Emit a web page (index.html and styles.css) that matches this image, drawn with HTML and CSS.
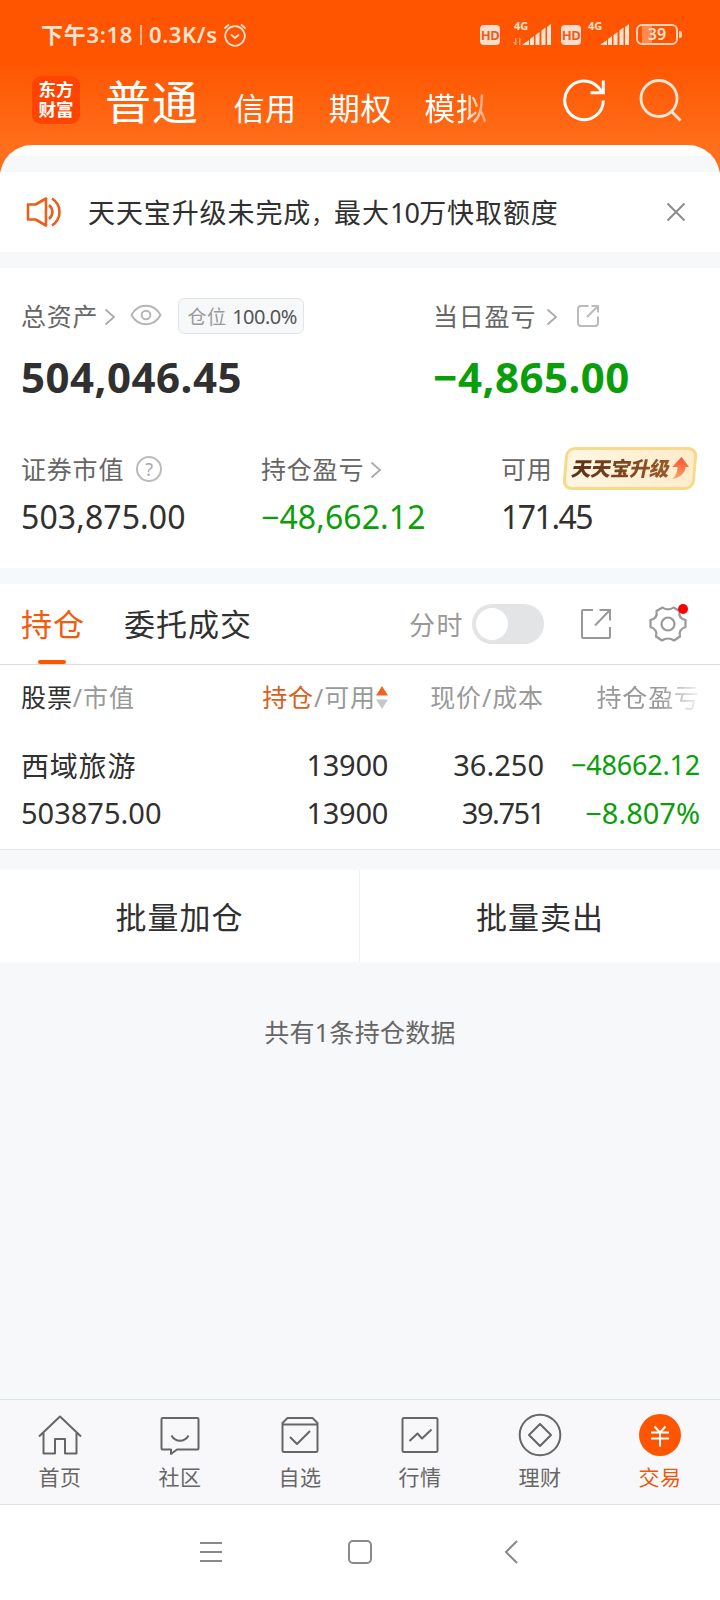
FILE: index.html
```html
<!DOCTYPE html>
<html lang="zh-CN">
<head>
    <meta charset="UTF-8">
    <meta name="viewport" content="width=device-width, initial-scale=1.0">
    <title>东方财富 - 交易</title>
    <link rel="stylesheet" href="styles.css">
</head>
<body>
<header class="header">
    <!-- Phone status bar -->
    <div class="status-bar">
        <span class="time">下午3:18</span>
        <span class="divider"></span>
        <span class="speed">0.3K/s</span>
        <svg class="alarm" width="24" height="24" viewBox="0 0 24 24" fill="none" stroke="currentColor" stroke-width="1.7">
            <circle cx="12" cy="13" r="9.8"/>
            <path d="M8 11.5l4 3.5 4-3.5M1.5 5.5l4.5-4M22.500 5.500l-4.500-4"/>
        </svg>
        <div class="status-right">
            <span class="hd">HD</span>
            <span class="signal">
                <span class="net">4G</span>
                <svg width="39" height="22" viewBox="0 0 39 22" fill="currentColor">
                    <path opacity=".55" d="M2 14h1.500v7H2L0 18h2zM6 21v-8l2.500 3H7.500v5z"/>
                    <path d="M9 21l7-5v5zM17 15l4-3V21h-4zM22.500 11l4-3V21h-4zM28.500 6.500l4-3V21h-4zM34 3l4-3V21h-4z"/>
                </svg>
            </span>
            <span class="hd">HD</span>
            <span class="signal second">
                <span class="net">4G</span>
                <svg width="39" height="22" viewBox="0 0 39 22" fill="currentColor">
                    <path d="M9 21l7-5v5zM17 15l4-3V21h-4zM22.500 11l4-3V21h-4zM28.500 6.500l4-3V21h-4zM34 3l4-3V21h-4z"/>
                </svg>
            </span>
            <span class="battery">39</span>
        </div>
    </div>

    <!-- Account types -->
    <nav class="account-nav">
        <div class="logo"><span>东方</span><span>财富</span></div>
        <span class="account active">普通</span>
        <span class="account">信用</span>
        <span class="account">期权</span>
        <span class="account last">模拟</span>
        <svg class="refresh" width="44" height="44" viewBox="0 0 44 44" fill="none" stroke="#fff" stroke-width="3">
            <path d="M41.300 22.500A19.300 19.300 0 1 1 36.500 9.600L40 14"/>
            <path d="M41.300 2.500v12.200H28.500"/>
        </svg>
        <svg class="search" width="44" height="44" viewBox="0 0 44 44" fill="none" stroke="#ffe6d8" stroke-width="2.800">
            <circle cx="21" cy="20.500" r="18"/>
            <path d="M33.500 33.500l9 9"/>
        </svg>
    </nav>
</header>

<main class="sheet">
    <div class="notice">
        <svg class="speaker" width="36" height="32" viewBox="0 0 36 32" fill="none" stroke="#e8601c" stroke-width="2.600" stroke-linejoin="round">
            <path d="M2 8.500h7.500L20 2.500v27L9.500 23.500H2z"/>
            <path d="M23 9c4.500 4 4.500 10 0 14M26 2.500c10 6.500 10 20.500 0 27"/>
        </svg>
        <span class="notice-text">天天宝升级未完成<i class="comma">，</i>最大<i class="num">10</i>万快取额度</span>
        <svg class="close" width="20" height="20" viewBox="0 0 20 20" fill="none" stroke="#8c8c8c" stroke-width="2">
            <path d="M1.500 1.500l17 17M18.500 1.500l-17 17"/>
        </svg>
    </div>

    <section class="assets">
        <div class="totals">
            <div class="total">
                <div class="label">
                    <span class="name">总资产</span>
                    <svg class="arrow" width="12" height="18" viewBox="0 0 12 18" fill="none" stroke="#aaa" stroke-width="1.800"><path d="M1.500 1.500L10 9l-8.500 7.500"/></svg>
                    <svg class="eye" width="32" height="22" viewBox="0 0 32 22" fill="none" stroke="#b5b5b5" stroke-width="2">
                        <path d="M1.500 11C5 4.500 10 1.800 16 1.800S27 4.500 30.500 11C27 17.500 22 20.200 16 20.200S5 17.500 1.500 11z"/>
                        <circle cx="16" cy="11" r="4.300"/>
                    </svg>
                    <span class="position">仓位 <b>100.0%</b></span>
                </div>
                <div class="big">504,046.45</div>
            </div>
            <div class="total">
                <div class="label">
                    <span class="name">当日盈亏</span>
                    <svg class="arrow wide" width="12" height="18" viewBox="0 0 12 18" fill="none" stroke="#aaa" stroke-width="1.800"><path d="M1.500 1.500L10 9l-8.500 7.500"/></svg>
                    <svg class="share" width="24" height="24" viewBox="0 0 24 24" fill="none" stroke="#bbb" stroke-width="2">
                        <path d="M12.500 2H5a3 3 0 0 0-3 3v14a3 3 0 0 0 3 3h14a3 3 0 0 0 3-3v-6.500M11 13L22 2M15.500 2H22v6.500"/>
                    </svg>
                </div>
                <div class="big green">−4,865.00</div>
            </div>
        </div>
        <div class="details">
            <div class="detail">
                <div class="label">
                    <span class="name">证券市值</span>
                    <span class="help">?</span>
                </div>
                <div class="value">503,875.00</div>
            </div>
            <div class="detail">
                <div class="label">
                    <span class="name">持仓盈亏</span>
                    <svg class="arrow" width="12" height="18" viewBox="0 0 12 18" fill="none" stroke="#aaa" stroke-width="1.800"><path d="M1.500 1.500L10 9l-8.500 7.500"/></svg>
                </div>
                <div class="value green">−48,662.12</div>
            </div>
            <div class="detail">
                <div class="label">
                    <span class="name">可用</span>
                    <span class="upgrade">
                        <em>天天宝升级</em>
                        <svg width="17" height="23" viewBox="0 0 17 23">
                            <defs>
                                <linearGradient id="up" x1="0" y1="0" x2="0" y2="1">
                                    <stop offset="0" stop-color="#f8502e"/>
                                    <stop offset="1" stop-color="#fba56c"/>
                                </linearGradient>
                            </defs>
                            <path fill="url(#up)" d="M8.500 0l8.500 10h-3.500c0 6-4 10.500-12.500 12C4.500 19.500 5.500 15.500 5.500 10H0z"/>
                        </svg>
                    </span>
                </div>
                <div class="value tight">171.45</div>
            </div>
        </div>
    </section>

    <section class="holdings">
        <div class="tabs">
            <span class="tab active">持仓</span>
            <span class="tab">委托成交</span>
            <span class="minute">分时</span>
            <span class="switch"></span>
            <svg class="export" width="32" height="32" viewBox="0 0 32 32" fill="none" stroke="#999" stroke-width="2">
                <path d="M13 2H3a1 1 0 0 0-1 1v26a1 1 0 0 0 1 1h26a1 1 0 0 0 1-1V19M15 17.500L30 2M19.500 2H30v10.500"/>
            </svg>
            <span class="settings">
                <svg width="38" height="38" viewBox="0 0 38 38" fill="none" stroke="#999" stroke-width="2.200" stroke-linejoin="round">
                    <path d="M13.500 2.500C16.500 5 21.500 5 24.500 2.500L30.500 6C29.500 11 32 14 36.500 15V22C32 23.500 29.500 27 31 31.500L25 35.500C21.500 33 16.500 33 13 35.500L7 31.500C8.500 27 6 23.500 1.500 22V15C6 14 8.500 11 7.500 6z"/>
                    <circle cx="19" cy="19" r="6.500"/>
                </svg>
                <i class="dot"></i>
            </span>
        </div>

        <div class="table">
            <div class="row head">
                <div><strong>股票</strong>/市值</div>
                <div class="sorted"><strong class="orange">持仓</strong>/可用<svg width="12" height="23" viewBox="0 0 12 23"><path fill="#f0641e" d="M6 0l6 9.500H0z"/><path fill="#c8c8c8" d="M6 23l6-9.500H0z"/></svg></div>
                <div>现价/成本</div>
                <div class="faded">持仓盈亏</div>
            </div>
            <div class="row">
                <div class="stock">西域旅游</div>
                <div class="shares">13900</div>
                <div>36.250</div>
                <div class="green small">−48662.12</div>
            </div>
            <div class="row">
                <div>503875.00</div>
                <div class="shares">13900</div>
                <div class="cost">39.751</div>
                <div class="green">−8.807%</div>
            </div>
        </div>
    </section>

    <div class="batch">
        <button>批量加仓</button>
        <button>批量卖出</button>
    </div>
    <p class="count">共有1条持仓数据</p>
</main>

<!-- Bottom menu -->
<nav class="bottom-nav">
    <a class="item">
        <svg width="44" height="44" viewBox="0 0 44 44">
            <path d="M1 23.500L22 3.500l21 20M5.500 19.500V40.500H17V26h10v14.500h11.500V19.500"/>
        </svg>
        <span>首页</span>
    </a>
    <a class="item">
        <svg width="44" height="44" viewBox="0 0 44 44">
            <path d="M4.500 5h35a1 1 0 0 1 1 1v29.500a1 1 0 0 1-1 1H19L13 41v-4.500H4.500a1 1 0 0 1-1-1V6a1 1 0 0 1 1-1zM13.500 22.500c4 7 13 7 17 0"/>
        </svg>
        <span>社区</span>
    </a>
    <a class="item">
        <svg width="44" height="44" viewBox="0 0 44 44">
            <path d="M4.500 11.500h35v26a1.500 1.500 0 0 1-1.500 1.500H6a1.500 1.500 0 0 1-1.500-1.500zM4.500 11.500v-1.500L9.500 5h25l5 5v1.500M12 24l7 7 13-13"/>
        </svg>
        <span>自选</span>
    </a>
    <a class="item">
        <svg width="44" height="44" viewBox="0 0 44 44">
            <rect x="4.500" y="5" width="35" height="34" rx="1.500"/>
            <path d="M11.500 28l8-7.500 4.500 5 9.500-9"/>
        </svg>
        <span>行情</span>
    </a>
    <a class="item">
        <svg width="44" height="44" viewBox="0 0 44 44">
            <circle cx="22" cy="22" r="20.300"/>
            <path d="M22 11l11 11-11 11-11-11z"/>
        </svg>
        <span>理财</span>
    </a>
    <a class="item active">
        <svg width="44" height="44" viewBox="0 0 44 44">
            <circle class="fill" cx="22" cy="22" r="21"/>
            <path class="yen" d="M16.500 13.500l5.500 6 5.500-6M13 19.500h18M13 25.500h18M22 19.500v14"/>
        </svg>
        <span>交易</span>
    </a>
</nav>

<!-- Android buttons -->
<div class="system-nav">
    <svg width="22" height="22" viewBox="0 0 22 22"><path d="M0 2h22M0 11h22M0 20h22"/></svg>
    <svg width="24" height="24" viewBox="0 0 24 24"><rect x="1" y="1" width="22" height="22" rx="4"/></svg>
    <svg width="14" height="24" viewBox="0 0 14 24"><path d="M13 1L2 12l11 11"/></svg>
</div>
</body>
</html>
```
FILE: styles.css
```css
/* Reset some default styles */
* {
    box-sizing: border-box;
    margin: 0;
    padding: 0;
}

/* Global styles */
body {
    width: 720px;
    height: 1600px;
    display: flex;
    flex-direction: column;
    font-family: "Noto Sans", "Noto Sans CJK SC", sans-serif;
    background-color: #f7f8fa;
    color: #303030;
    overflow: hidden;
}

svg {
    display: block;
    flex-shrink: 0;
}

.green {
    color: #0a9e0a;
}

.orange {
    color: #d9611c;
}

/* Header styles */
.header {
    height: 180px;
    flex-shrink: 0;
    background: linear-gradient(to bottom, #ff5500 62px, #ff701c 150px);
}

.status-bar {
    height: 69px;
    display: flex;
    align-items: center;
    padding: 0 37px 0 41px;
    font-size: 22px;
    font-weight: 600;
    line-height: 30px;
    color: #ffe3d3;
}

.time {
    width: 99px;
    margin-top: -2px;
    letter-spacing: 0.7px;
    white-space: nowrap;
}

.divider {
    width: 2px;
    height: 20px;
    margin-right: 7px;
    background-color: #ffb48c;
}

.speed {
    width: 74px;
    margin-top: -2px;
    letter-spacing: 0.6px;
}

.status-right {
    display: flex;
    align-items: center;
    margin-left: auto;
}

.hd {
    width: 20px;
    height: 20px;
    border-radius: 4px;
    background-color: #ffdccb;
    color: #e8601c;
    font-size: 13px;
    font-weight: 700;
    line-height: 20px;
    letter-spacing: -0.5px;
    text-align: center;
}

.signal {
    position: relative;
    width: 61px;
    padding-left: 13px;
}

.signal.second {
    padding-left: 10px;
}

.net {
    position: absolute;
    top: -5px;
    left: 14px;
    font-size: 11px;
    font-weight: 700;
    line-height: 14px;
}

.signal.second .net {
    left: 7px;
}

.battery {
    position: relative;
    width: 42px;
    height: 21px;
    margin-left: -6px;
    margin-right: 5px;
    border: 2px solid #ffd0b8;
    border-radius: 6px;
    background: linear-gradient(to right, transparent 4px, #ff8a50 4px, #ff8a50 14px, transparent 14px);
    font-size: 16px;
    line-height: 17px;
    text-align: center;
}

.battery::after {
    content: "";
    position: absolute;
    right: -6px;
    top: 5px;
    width: 3px;
    height: 7px;
    border-radius: 0 2px 2px 0;
    background-color: #ffd0b8;
}

/* Account types */
.account-nav {
    height: 62px;
    display: flex;
    align-items: center;
    padding: 0 38px 0 32px;
    color: #fff;
}

.logo {
    display: flex;
    flex-direction: column;
    justify-content: center;
    width: 48px;
    height: 48px;
    border-radius: 9px;
    background-color: #ff4400;
    font-family: "Noto Sans CJK SC", sans-serif;
    font-size: 17.5px;
    font-weight: 700;
    line-height: 20px;
    padding-bottom: 2px;
    text-align: center;
}

.account {
    margin-right: 32px;
    padding-top: 16px;
    font-size: 31px;
    line-height: 40px;
    letter-spacing: 0.7px;
    white-space: nowrap;
}

.account.active {
    margin-left: 25px;
    margin-right: 35px;
    padding-top: 2px;
    font-size: 46px;
    line-height: 56px;
}

.account.last {
    margin-right: 0;
    -webkit-mask-image: linear-gradient(to right, #000 60%, rgba(0, 0, 0, 0.35));
    mask-image: linear-gradient(to right, #000 60%, rgba(0, 0, 0, 0.35));
}

.refresh {
    margin-left: auto;
}

.search {
    margin-left: 32px;
}

/* White sheet over the header */
.sheet {
    flex: 1;
    margin-top: -35px;
    border-radius: 32px 32px 0 0;
    background: linear-gradient(to bottom, #fff 11px, #f7f8fa 11px);
    overflow: hidden;
    padding-top: 27px;
}

/* Notice styles */
.notice {
    height: 80px;
    display: flex;
    align-items: center;
    padding: 0 34px 0 26px;
    background-color: #fff;
}

.notice-text {
    margin-left: 26px;
    padding-top: 3px;
    font-size: 27px;
    line-height: 40px;
    letter-spacing: 0.9px;
    white-space: nowrap;
}

.notice-text i {
    font-style: normal;
}

.notice-text .comma {
    font-size: 22px;
}

.notice-text .num {
    letter-spacing: -0.8px;
}

.close {
    margin-left: auto;
}

/* Asset styles */
.assets {
    height: 300px;
    margin-top: 16px;
    padding-top: 29px;
    background-color: #fff;
}

.totals {
    display: grid;
    grid-template-columns: 412px 1fr;
    padding-left: 21px;
}

.label {
    display: flex;
    align-items: center;
    height: 40px;
    font-size: 25px;
    letter-spacing: 0.8px;
    color: #666;
    white-space: nowrap;
}

.name {
    line-height: 36px;
    margin-top: -2px;
}

.arrow {
    margin-left: 6px;
}

.arrow.wide {
    margin-left: 10px;
}

.eye {
    margin-left: 14px;
    margin-top: -4px;
}

.position {
    width: 126px;
    height: 36px;
    margin-left: 16px;
    margin-top: -2px;
    padding-left: 8px;
    border: 1px solid #e3e4e6;
    border-radius: 6px;
    background-color: #f7f8fa;
    font-size: 19px;
    line-height: 35px;
    letter-spacing: 0.6px;
    color: #999;
}

.position b {
    font-weight: 400;
    font-size: 20px;
    letter-spacing: -0.5px;
    color: #555;
}

.share {
    margin-left: 18px;
    margin-top: -2px;
}

.big {
    height: 80px;
    font-size: 42px;
    font-weight: 700;
    line-height: 80px;
    letter-spacing: 0.5px;
}

.details {
    display: grid;
    grid-template-columns: 240px 240px 1fr;
    padding: 33px 0 0 21px;
}

.help {
    width: 26px;
    height: 26px;
    margin-left: 12px;
    margin-top: -3px;
    border: 2px solid #bbb;
    border-radius: 50%;
    color: #aaa;
    font-size: 18px;
    line-height: 22px;
    letter-spacing: 0;
    text-align: center;
}

.upgrade {
    display: flex;
    align-items: center;
    width: 132px;
    height: 43px;
    margin-left: 11px;
    margin-top: -4px;
    padding-left: 5px;
    border: 3px solid #f8d98a;
    border-radius: 9px;
    background: linear-gradient(to right, #fff6e2, #ffeccb);
    transform: skewX(-5deg);
}

.upgrade em {
    width: 100px;
    font-size: 20px;
    font-style: normal;
    font-weight: 900;
    line-height: 30px;
    letter-spacing: -0.5px;
    transform: skewX(-7deg);
    background: linear-gradient(to right, #5a3118, #9a5a2c);
    -webkit-background-clip: text;
    background-clip: text;
    color: transparent;
}

.value {
    height: 52px;
    font-size: 32px;
    line-height: 53px;
    letter-spacing: 0.1px;
}

.value.tight {
    letter-spacing: -1.5px;
}

/* Holdings styles */
.holdings {
    height: 266px;
    margin-top: 16px;
    background-color: #fff;
    border-bottom: 1px solid #e8e9eb;
}

.tabs {
    height: 81px;
    display: flex;
    align-items: center;
    padding: 0 33px 0 21px;
    border-bottom: 1px solid #dcdcdc;
}

.tab {
    position: relative;
    margin-right: 41px;
    padding-top: 1px;
    font-size: 31px;
    line-height: 79px;
    letter-spacing: 1px;
    white-space: nowrap;
}

.tab.active {
    margin-right: 39px;
    color: #f25a0c;
}

.tab.active::after {
    content: "";
    position: absolute;
    left: 17px;
    bottom: 0;
    width: 28px;
    height: 4px;
    border-radius: 2px;
    background-color: #ff5500;
}

.minute {
    margin-left: auto;
    margin-right: 8px;
    padding-top: 2px;
    font-size: 26px;
    line-height: 40px;
    letter-spacing: 1.5px;
    color: #999;
}

.switch {
    width: 72px;
    height: 40px;
    border-radius: 20px;
    background-color: #e3e4e6;
    padding: 4px;
}

.switch::before {
    content: "";
    display: block;
    width: 32px;
    height: 32px;
    border-radius: 50%;
    background-color: #fff;
}

.export {
    margin-left: 36px;
}

.settings {
    position: relative;
    margin-left: 37px;
}

.dot {
    position: absolute;
    top: -1px;
    right: -1px;
    width: 10px;
    height: 10px;
    border-radius: 50%;
    background-color: #ff0000;
}

/* Holdings table */
.row {
    height: 48px;
    display: grid;
    grid-template-columns: 180px 187px 156px 156px;
    padding-left: 21px;
    font-size: 29px;
    line-height: 46px;
    text-align: right;
    white-space: nowrap;
}

.row > :first-child {
    text-align: left;
}

.row.head {
    height: 77px;
    font-size: 25px;
    line-height: 65px;
    letter-spacing: 0.9px;
    color: #999;
}

.row.head strong {
    font-weight: 400;
    color: #303030;
}

.row.head .orange {
    color: #d9611c;
}

.sorted {
    display: flex;
    align-items: center;
    justify-content: flex-end;
    height: 64px;
}

.faded {
    -webkit-mask-image: linear-gradient(to right, #000 75%, rgba(0, 0, 0, 0.1));
    mask-image: linear-gradient(to right, #000 75%, rgba(0, 0, 0, 0.1));
}

.row .stock {
    font-size: 28px;
    line-height: 48px;
    letter-spacing: 0.8px;
}

.shares {
    letter-spacing: -0.3px;
}

.cost {
    letter-spacing: -1.4px;
}

.row .small {
    font-size: 27px;
    letter-spacing: -0.2px;
}

/* Batch buttons */
.batch {
    height: 92px;
    display: flex;
    margin-top: 20px;
    background-color: #fff;
}

.batch button {
    width: 360px;
    padding-bottom: 2px;
    border: none;
    background: none;
    color: #303030;
    font-family: inherit;
    font-size: 31px;
    letter-spacing: 1px;
}

.batch button:first-child {
    border-right: 1px solid #f0f1f3;
}

.count {
    margin-top: 50px;
    font-size: 25px;
    line-height: 40px;
    letter-spacing: 0.3px;
    text-align: center;
    color: #666;
}

/* Bottom menu */
.bottom-nav {
    height: 106px;
    flex-shrink: 0;
    display: grid;
    grid-template-columns: repeat(6, 1fr);
    padding-top: 13px;
    border-top: 1px solid #e0e1e3;
    border-bottom: 1px solid #e0e1e3;
    background-color: #f8f8fa;
}

.item {
    display: flex;
    flex-direction: column;
    align-items: center;
    color: #666;
    font-size: 21px;
    line-height: 28px;
    letter-spacing: 0.4px;
}

.item svg {
    margin-bottom: 6px;
    fill: none;
    stroke: #666;
    stroke-width: 2;
    stroke-linejoin: round;
}

.item.active {
    color: #e8590c;
}

.item .fill {
    fill: #ff5500;
    stroke: none;
}

.item .yen {
    stroke: #fff;
}

/* Android buttons */
.system-nav {
    height: 95px;
    flex-shrink: 0;
    display: flex;
    align-items: center;
    padding: 0 0 2px 200px;
    background-color: #fff;
}

.system-nav svg {
    fill: none;
    stroke: #8a8a8a;
    stroke-width: 2;
    margin-right: 126px;
}

.system-nav svg:nth-child(2) {
    margin-right: 132px;
}
```
